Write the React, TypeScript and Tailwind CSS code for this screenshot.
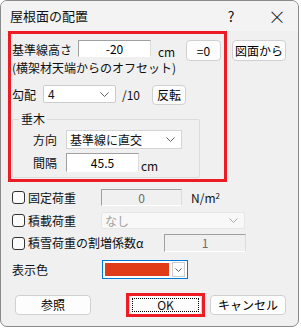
const font = { fontFamily: '"Noto Sans CJK JP", "Noto Sans", sans-serif' };

function Chevron() {
  return (
    <svg width="9" height="5" viewBox="0 0 9 5" className="shrink-0">
      <polyline points="0.5,0.5 4.5,4.5 8.5,0.5" fill="none" stroke="#606060" strokeWidth="1" />
    </svg>
  );
}

function Button({ label, className = "" }: { label: string; className?: string }) {
  return (
    <div
      className={`flex items-center justify-center rounded-[4px] border border-[#d0d0d0] bg-[#fdfdfd] text-[12px] text-black ${className}`}
    >
      {label}
    </div>
  );
}

function SunkenInput({ value, className = "", disabled = false }: { value: string; className?: string; disabled?: boolean }) {
  return (
    <div
      className={`flex items-center justify-center border border-t-[#a0a0a0] border-l-[#a0a0a0] border-r-[#dcdcdc] border-b-[#ffffff] text-[12px] leading-none ${
        disabled ? "bg-[#f0f0f0] text-[#6d6d6d]" : "bg-white text-black"
      } ${className}`}
    >
      {value}
    </div>
  );
}

function Checkbox({ label }: { label: string }) {
  return (
    <div className="flex items-center">
      <div className="h-[13px] w-[13px] rounded-[3px] border border-[#333333] bg-[#fbfbfb]" />
      <span className="ml-[3px] text-[12px] leading-none">{label}</span>
    </div>
  );
}

export default function App() {
  return (
    <div className="h-[328px] w-[301px] bg-white" style={font}>
      <div className="relative flex h-[327px] w-[299px] flex-col overflow-hidden rounded-[7px] border border-[#8a8a8a] bg-[#f0f0f0] text-[#111]">
        {/* title bar */}
        <div className="flex h-[30px] items-center bg-[#f3f3f3] pl-[9px]">
          <span className="text-[13px]">屋根面の配置</span>
          <span className="ml-auto w-[20px] text-center text-[14px]">?</span>
          <span className="ml-[26px] mr-[11px] w-[20px] text-center text-[18px] font-light leading-none">×</span>
        </div>

        <div className="flex flex-col pl-[11px]">
          {/* 基準線高さ */}
          <div className="mt-[9px] flex h-[21px] items-start">
            <span className="w-[66px] pt-[1px] text-[12px] leading-[17px]">基準線高さ</span>
            <SunkenInput value="-20" className="h-[17px] w-[73px]" />
            <span className="ml-[7px] mt-[6px] h-[12px] w-[28px] text-[12px] leading-[12px]">cm</span>
            <Button label="=0" className="h-[21px] w-[35px]" />
            <Button label="図面から" className="ml-[11px] h-[21px] w-[54px]" />
          </div>
          <div className="mt-[1px] h-[12px] text-[12px] leading-[12px]">(横架材天端からのオフセット)</div>

          {/* 勾配 */}
          <div className="mt-[11px] flex h-[20px] items-start">
            <span className="w-[31px] text-[12px] leading-[20px]">勾配</span>
            <div className="flex h-[18px] w-[73px] items-center rounded-[2px] border border-[#cccccc] bg-white pl-[4px] pr-[6px] text-[12px]">
              <span>4</span>
              <span className="ml-auto">
                <Chevron />
              </span>
            </div>
            <span className="ml-[6px] w-[30px] pt-[2px] text-[12px] leading-[16px]">/10</span>
            <Button label="反転" className="h-[20px] w-[34px]" />
          </div>

          {/* 垂木 group */}
          <div className="relative mt-[14px] h-[59px] w-[188px] rounded-[2px] border border-[#dcdcdc] pl-[20px] pt-[10px]">
            <span className="absolute left-[6px] top-[-8px] bg-[#f0f0f0] px-[2px] text-[12px] leading-[14px]">垂木</span>
            <div className="flex h-[19px] items-center">
              <span className="w-[33px] text-[12px]">方向</span>
              <div className="flex h-[19px] w-[116px] items-center border border-[#d4d4d4] bg-white pl-[3px] pr-[6px] text-[12px]">
                <span>基準線に直交</span>
                <span className="ml-auto">
                  <Chevron />
                </span>
              </div>
            </div>
            <div className="mt-[4px] flex h-[19px] items-start">
              <span className="w-[33px] text-[12px] leading-[19px]">間隔</span>
              <SunkenInput value="45.5" className="h-[19px] w-[73px]" />
              <span className="ml-[2px] mt-[7px] h-[12px] text-[12px] leading-[12px]">cm</span>
            </div>
          </div>

          {/* 固定荷重 */}
          <div className="mt-[11px] flex h-[17px] items-center">
            <div className="w-[89px]">
              <Checkbox label="固定荷重" />
            </div>
            <SunkenInput value="0" disabled className="h-[17px] w-[81px]" />
            <span className="ml-[9px] text-[12px]">
              N/m<sup className="text-[8px]">2</sup>
            </span>
          </div>

          {/* 積載荷重 */}
          <div className="mt-[6px] flex h-[17px] items-center">
            <div className="w-[89px]">
              <Checkbox label="積載荷重" />
            </div>
            <div className="flex h-[17px] w-[144px] items-center rounded-[2px] border border-[#e6e6e6] bg-[#f8f8f8] pl-[3px] pr-[6px] text-[12px] text-[#a0a0a0]">
              <span>なし</span>
              <span className="ml-auto opacity-50">
                <Chevron />
              </span>
            </div>
          </div>

          {/* 積雪荷重 */}
          <div className="mt-[5px] flex h-[18px] items-center">
            <div className="w-[152px]">
              <Checkbox label="積雪荷重の割増係数α" />
            </div>
            <SunkenInput value="1" disabled className="h-[18px] w-[82px]" />
          </div>

          {/* 表示色 */}
          <div className="mt-[8px] flex h-[19px] items-center">
            <span className="w-[90px] text-[12px]">表示色</span>
            <div className="flex h-[19px] w-[86px] items-center border border-[#0078d7] bg-white p-[2px]">
              <div className="h-[13px] w-[65px] bg-[#e03c1a]" />
              <div className="ml-[3px] flex h-[15px] w-[13px] items-center justify-center border border-[#cfcfcf] bg-[#fdfdfd]">
                <svg width="7" height="4" viewBox="0 0 7 4">
                  <polyline points="0.5,0.5 3.5,3.5 6.5,0.5" fill="none" stroke="#606060" strokeWidth="1" />
                </svg>
              </div>
            </div>
          </div>

          {/* buttons */}
          <div className="mt-[16px] flex h-[20px] items-center">
            <Button label="参照" className="ml-[3px] h-[20px] w-[76px]" />
            <div className="ml-[38px] flex h-[20px] w-[73px] items-center justify-center rounded-[4px] border border-[#d0d0d0] bg-[#fdfdfd] p-[2px]">
              <div className="flex h-full w-full items-center justify-center border border-dotted border-black text-[12px]">
                OK
              </div>
            </div>
            <Button label="キャンセル" className="ml-[8px] h-[20px] w-[76px]" />
          </div>
        </div>

        {/* annotation overlays */}
        <div className="absolute left-[7px] top-[30px] h-[151px] w-[219px] border-[3px] border-[#ed1c24]" />
        <div className="absolute left-[125px] top-[292px] h-[24px] w-[79px] border-[3px] border-[#ed1c24]" />
      </div>
    </div>
  );
}
